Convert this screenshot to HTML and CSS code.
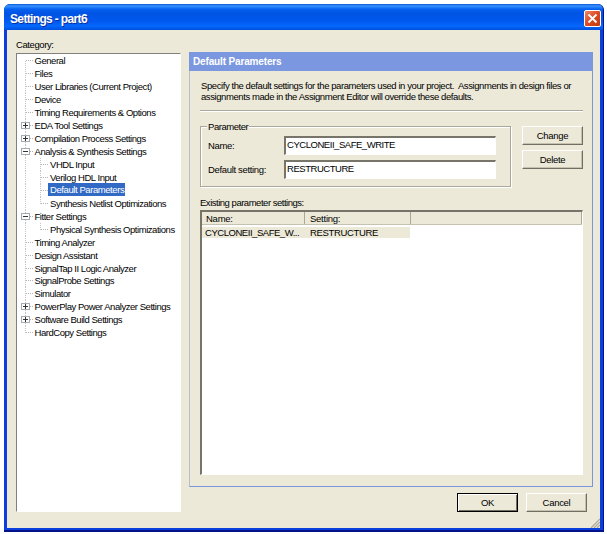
FILE: index.html
```html
<!DOCTYPE html>
<html lang="en">
<head>
<meta charset="utf-8">
<title>Settings - part6</title>
<link rel="stylesheet" href="styles.css">
</head>
<body>
<div class="window">
  <header class="titlebar">
    <h1>Settings - part6</h1>
    <button class="close" aria-label="Close"><svg width="11" height="11" viewBox="0 0 11 11"><path d="M1.5 1.5L9.5 9.5M9.5 1.5L1.5 9.5" stroke="#fff" stroke-width="1.8"/></svg></button>
  </header>
  <div class="client">
    <div class="main">
      <section class="category">
        <div class="category-label">Category:</div>
        <ul class="tree">
          <li><span>General</span></li>
          <li><span>Files</span></li>
          <li><span>User Libraries (Current Project)</span></li>
          <li><span>Device</span></li>
          <li><span>Timing Requirements &amp; Options</span></li>
          <li class="closed"><span>EDA Tool Settings</span></li>
          <li class="closed"><span>Compilation Process Settings</span></li>
          <li class="open"><span>Analysis &amp; Synthesis Settings</span></li>
          <li class="child"><span>VHDL Input</span></li>
          <li class="child"><span>Verilog HDL Input</span></li>
          <li class="child"><span class="selected">Default Parameters</span></li>
          <li class="child end"><span>Synthesis Netlist Optimizations</span></li>
          <li class="open"><span>Fitter Settings</span></li>
          <li class="child end"><span>Physical Synthesis Optimizations</span></li>
          <li><span>Timing Analyzer</span></li>
          <li><span>Design Assistant</span></li>
          <li><span>SignalTap II Logic Analyzer</span></li>
          <li><span>SignalProbe Settings</span></li>
          <li><span>Simulator</span></li>
          <li class="closed"><span>PowerPlay Power Analyzer Settings</span></li>
          <li class="closed"><span>Software Build Settings</span></li>
          <li class="last"><span>HardCopy Settings</span></li>
        </ul>
      </section>
      <section class="panel">
        <h2>Default Parameters</h2>
        <div class="panel-body">
          <p class="intro">Specify the default settings for the parameters used in your project.&nbsp; Assignments in design files or<br>assignments made in the Assignment Editor will override these defaults.</p>
          <div class="rule"></div>
          <div class="editor">
            <div class="group">
              <div class="legend">Parameter</div>
              <label class="field"><span>Name:</span><b class="input">CYCLONEII_SAFE_WRITE</b></label>
              <label class="field"><span>Default setting:</span><b class="input">RESTRUCTURE</b></label>
            </div>
            <div class="actions">
              <button class="btn">Change</button>
              <button class="btn">Delete</button>
            </div>
          </div>
          <div class="list-label">Existing parameter settings:</div>
          <div class="list">
            <div class="list-head"><span>Name:</span><span>Setting:</span><span></span></div>
            <div class="list-row"><span>CYCLONEII_SAFE_W...</span><span>RESTRUCTURE</span></div>
          </div>
        </div>
      </section>
    </div>
    <footer class="footer">
      <button class="btn primary">OK</button>
      <button class="btn">Cancel</button>
    </footer>
    <svg class="grip" width="10" height="10" viewBox="0 0 10 10"><path d="M1 10L10 1M4 10L10 4M7 10L10 7" stroke="#aca899" stroke-width="1.2"/></svg>
  </div>
</div>
</body>
</html>
```
FILE: styles.css
```css
*, *::before { box-sizing: border-box; }
body {
  margin: 0;
  padding: 4px 0 0 4px;
  height: 534px;
  overflow: hidden;
  background: #fff;
  color: #000;
  font: 9.5px/13px "Liberation Sans", Arial, sans-serif;
  letter-spacing: -0.46px;
  white-space: nowrap;
}
h1, h2, p, ul { margin: 0; padding: 0; }
button { font: inherit; letter-spacing: inherit; color: inherit; padding: 0; }

.window {
  width: 600px;
  height: 528px;
  display: flex;
  flex-direction: column;
  background: #0a3fdc;
  border-radius: 6px 6px 0 0;
  border-right: 1px solid #00138c;
  border-bottom: 2px solid #00138c;
  overflow: hidden;
}
.titlebar {
  flex: 0 0 26px;
  display: flex;
  align-items: center;
  justify-content: space-between;
  padding: 2px 2px 0 6px;
  background: linear-gradient(#0958d8 0, #3a93ff 2px, #0662f2 5px, #0054e3 9px, #0058ee 17px, #0468ff 22px, #0050dc 26px);
}
.titlebar h1 {
  font: bold 12px/16px "Liberation Sans", Arial, sans-serif;
  letter-spacing: -0.65px;
  padding-top: 1px;
  color: #fff;
  text-shadow: 1px 1px 0 #0a2f9c;
}
.close {
  width: 17px;
  height: 17px;
  display: grid;
  place-items: center;
  border: 1px solid #fff;
  border-radius: 2px;
  background: linear-gradient(135deg, #ec8a6c, #dc4a20 50%, #c03c14);
}

.client {
  position: relative;
  flex: 1;
  margin: 0 3px 2px 3px;
  padding: 8px 7px 0 9px;
  background: #ece9d8;
}
.main { display: flex; justify-content: space-between; height: 474px; }
.category { width: 165px; }
.category-label { height: 15px; line-height: 13px; letter-spacing: -0.4px; }
.tree {
  height: 459px;
  list-style: none;
  background: #fff;
  border: 1px solid #fff;
  border-top-color: #808080;
  border-left-color: #808080;
}
.tree li {
  position: relative;
  height: 12.97px;
  padding-left: 16.5px;
  background:
    repeating-linear-gradient(90deg, #b4b4b4 0 1px, transparent 1px 2px) 9px 6px / 7px 1px no-repeat,
    repeating-linear-gradient(#c4c4c4 0 1px, transparent 1px 2px) 8px 0 / 1px 100% no-repeat;
}
.tree li:first-child { background-position: 9px 6px, 8px 7px; }
.tree li.last { background-size: 7px 1px, 1px 7px; }
.tree li.child {
  padding-left: 32px;
  background:
    repeating-linear-gradient(90deg, #b4b4b4 0 1px, transparent 1px 2px) 24px 6px / 7px 1px no-repeat,
    repeating-linear-gradient(#c4c4c4 0 1px, transparent 1px 2px) 23px 0 / 1px 100% no-repeat,
    repeating-linear-gradient(#c4c4c4 0 1px, transparent 1px 2px) 8px 0 / 1px 100% no-repeat;
}
.tree li.child.end { background-size: 7px 1px, 1px 7px, 1px 100%; }
.tree span { display: inline-block; height: 13px; line-height: 13px; padding: 0 1px; vertical-align: top; }
.tree .selected { position: relative; top: -0.5px; background: #316ac5; color: #fff; margin-left: -1px; padding: 0 1px 0 2px; letter-spacing: -0.42px; }
.tree .open::before, .tree .closed::before {
  content: "";
  position: absolute;
  left: 4px;
  top: 3px;
  width: 9px;
  height: 7px;
  border: 1px solid #a4abb2;
  background: linear-gradient(#333, #333) 1px 2px / 5px 1px no-repeat #fff;
}
.tree .closed::before {
  background:
    linear-gradient(#333, #333) 1px 2px / 5px 1px no-repeat,
    linear-gradient(#333, #333) 3px 0 / 1px 5px no-repeat #fff;
}

.panel {
  width: 404px;
  height: 435px;
  margin-top: 14px;
  border: 1px solid #7996dd;
  border-left-color: #b4bfd0;
  border-top: 0;
}
.panel h2 {
  height: 19px;
  margin: 0 -1px;
  padding-left: 4px;
  background: #7b97e0;
  color: #fff;
  font: bold 10px/20px "Liberation Sans", Arial, sans-serif;
  letter-spacing: -0.15px;
}
.panel-body { padding: 10px 9px 0 10px; }
.intro { line-height: 10.5px; height: 29px; padding-left: 1px; letter-spacing: -0.42px; }
.rule { height: 2px; border-top: 1px solid #aca899; border-bottom: 1px solid #fff; }
.editor { display: flex; justify-content: space-between; padding-top: 14px; height: 84px; }
.group {
  width: 311px;
  height: 61px;
  border: 1px solid #aca899;
  box-shadow: 1px 1px 0 #fff, inset 1px 1px 0 #fff;
}
.legend { width: 42px; height: 12px; line-height: 12px; margin: -6px 0 3px 6px; padding-left: 1px; letter-spacing: -0.45px; background: #ece9d8; }
.field { display: flex; align-items: center; height: 19px; margin: 0 14px 5px 7px; }
.field > span { width: 76px; letter-spacing: -0.33px; }
.input {
  flex: 1;
  height: 19px;
  padding-left: 1px;
  line-height: 14px;
  font-weight: normal;
  background: #fff;
  border: 1px solid #fff;
  border-top: 2px solid #77756a;
  border-left: 2px solid #77756a;
}
.actions { display: flex; flex-direction: column; gap: 5px; width: 61px; }
.btn {
  width: 61px;
  height: 19px;
  line-height: 16px;
  text-align: center;
  letter-spacing: -0.3px;
  background: #ece9d8;
  border: 1px solid #fff;
  border-right-color: #716f64;
  border-bottom-color: #716f64;
  box-shadow: inset -1px -1px 0 #c5c2b0;
}
.list-label { height: 14px; letter-spacing: -0.48px; }
.list {
  width: 383px;
  height: 265px;
  background: #fff;
  border: 1px solid #fff;
  border-top: 2px solid #77756a;
  border-left: 2px solid #77756a;
}
.list-head { display: flex; height: 13px; background: #ece9d8; border-bottom: 1px solid #c5c2b0; letter-spacing: -0.25px; }
.list-head span { width: 103px; line-height: 14px; padding-left: 4px; border-right: 1px solid #aca899; }
.list-head span + span { width: 106px; padding-left: 5px; }
.list-head span:last-child { flex: 1; }
.list-row { display: flex; width: 208px; height: 11px; margin-top: 2px; line-height: 12px; background: #ece9d8; }
.list-row span { width: 103px; padding-left: 3px; }
.list-row span + span { padding-left: 5px; letter-spacing: -0.35px; }

.footer { display: flex; justify-content: flex-end; gap: 8px; padding: 0 6px 0 0; margin-top: -19px; position: relative; }
.primary { border: 1px solid #000; box-shadow: inset 1px 1px 0 #fff, inset -1px -1px 0 #716f64; }
.grip { position: absolute; right: 0; bottom: 0; }
```
